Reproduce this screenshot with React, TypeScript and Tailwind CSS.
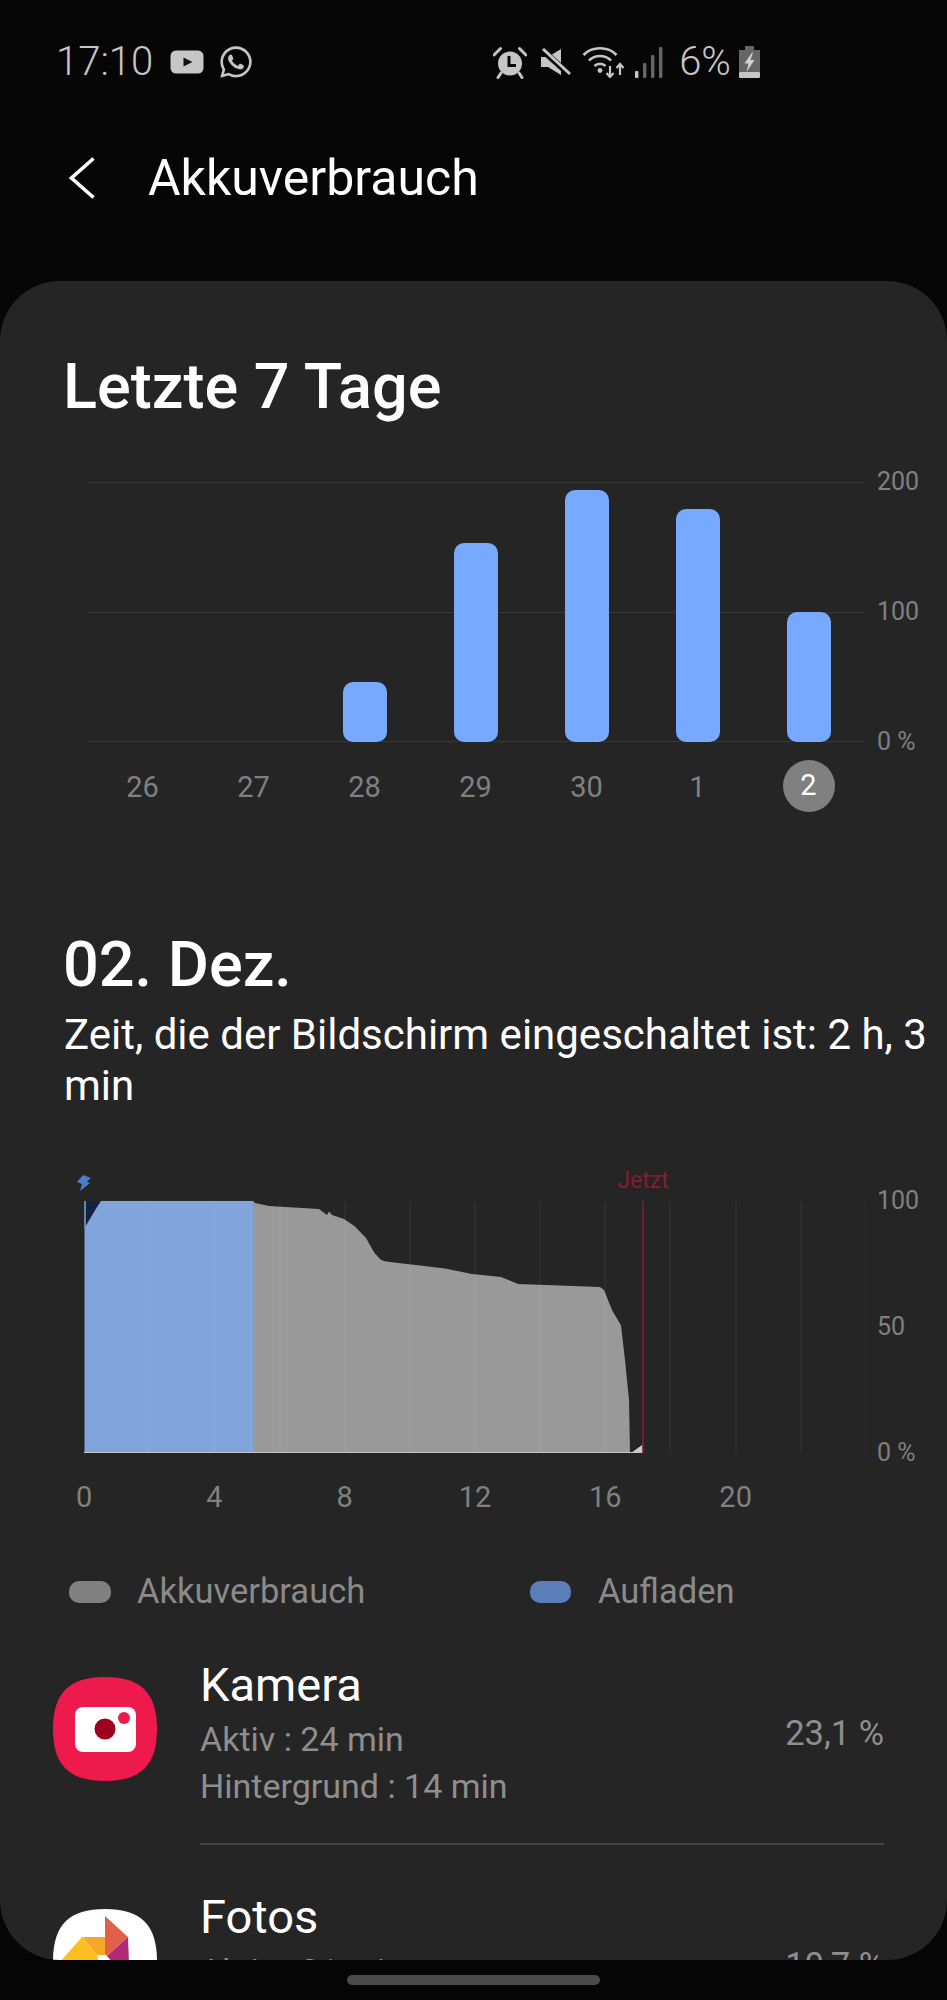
import React from 'react';
import { FaWhatsapp } from 'react-icons/fa';

const days = [
  { label: '26', height: 0 },
  { label: '27', height: 0 },
  { label: '28', height: 60 },
  { label: '29', height: 199 },
  { label: '30', height: 252 },
  { label: '1', height: 233 },
  { label: '2', height: 130 }
];

const hours = ['0', '4', '8', '12', '16', '20'];

// battery curve, coordinates are local to the 782x252 plot
const chargePath = 'M0.5 27 L13 6 L17 0 L169 0 L169 252 L0.5 252 Z';
const usagePath =
  'M169 0 L171 2 L185 5 L235 8 L243 14 L245 10.5 L248 14 L260 18 L271 25.5 L282 37 L290.5 52 L297 59 L302 60.5 L361 67.5 L388 73 L417 76 L424.5 79 L434 83 L516 86 L520 89 L528 109 L537 124.5 L541 159 L545 199 L546 252 L169 252 Z';
const endPath = 'M547 252 L558 244 L558 239.5 L559 252 Z';
const gridX = [65, 130, 196, 261, 326, 391, 456, 521, 586, 652, 717, 782];

function YouTubeIcon() {
  return (
    <svg width="34" height="24" viewBox="0 0 34 24" className="ml-[17px]">
      <rect x="0.5" y="0.5" width="33" height="23" rx="5.5" fill="#c6c6c6" />
      <path d="M13.5 7.5 L22.5 12 L13.5 16.5 Z" fill="#111111" />
    </svg>
  );
}

function AlarmIcon() {
  return (
    <svg width="34" height="33" viewBox="0 0 34 33">
      <circle cx="17" cy="17.5" r="12" fill="#c6c6c6" />
      <path d="M1 9 L7.5 2.5 M33 9 L26.5 2.5" stroke="#c6c6c6" strokeWidth="3" strokeLinecap="round" />
      <path d="M8 27 L5 31.5 M26 27 L29 31.5" stroke="#c6c6c6" strokeWidth="3" strokeLinecap="round" />
      <path d="M16 10 L16 19.5 L23 19.5" stroke="#0a0a0a" strokeWidth="3" fill="none" />
    </svg>
  );
}

function MuteIcon() {
  return (
    <svg width="30" height="28" viewBox="0 0 30 28">
      <path d="M0 9 L7 9 L20 1 L20 27 L7 19 L0 19 Z" fill="#c6c6c6" />
      <path d="M0.5 1.5 L29 27" stroke="#060606" strokeWidth="6" />
      <path d="M2 1 L29 26" stroke="#c6c6c6" strokeWidth="3" />
    </svg>
  );
}

function WifiIcon() {
  return (
    <svg width="43" height="32" viewBox="0 0 43 32" fill="none">
      <path d="M1.5 9 C 10 0, 26 0, 34.5 9" stroke="#c6c6c6" strokeWidth="2.6" />
      <path d="M7 14.5 C 13 8.5, 23 8.5, 29 14.5" stroke="#c6c6c6" strokeWidth="2.6" />
      <path d="M12.5 20 C 15.5 17, 20.5 17, 23.5 20" stroke="#c6c6c6" strokeWidth="2.6" />
      <circle cx="18" cy="24.5" r="2.4" fill="#c6c6c6" />
      <path d="M28 20 L28 31 M24.5 27 L28 31 L31.5 27" stroke="#c6c6c6" strokeWidth="2.2" />
      <path d="M38 29 L38 18 M34.5 22 L38 18 L41.5 22" stroke="#c6c6c6" strokeWidth="2.2" />
    </svg>
  );
}

function SignalIcon() {
  return (
    <svg width="28" height="31" viewBox="0 0 28 31">
      <rect x="0" y="24" width="3.4" height="7" rx="1" fill="#c6c6c6" />
      <rect x="8" y="16" width="3.4" height="15" rx="1" fill="#666666" />
      <rect x="16" y="8" width="3.4" height="23" rx="1" fill="#666666" />
      <rect x="24" y="0" width="3.4" height="31" rx="1" fill="#666666" />
    </svg>
  );
}

function BatteryIcon() {
  return (
    <svg width="21" height="32" viewBox="0 0 21 32">
      <rect x="6" y="0" width="9" height="4" fill="#666666" />
      <rect x="0" y="4" width="21" height="22" fill="#666666" />
      <rect x="0" y="26" width="21" height="6" rx="1" fill="#c6c6c6" />
      <path d="M13 6.5 L5.5 17.5 L9.5 17.5 L7.5 26 L15.5 14 L11.5 14 L14 6.5 Z" fill="#d0d0d0" />
    </svg>
  );
}

function CameraIcon() {
  return (
    <svg width="104" height="104" viewBox="0 0 104 104" className="shrink-0">
      <path d="M52 0 C 88 0, 104 16, 104 52 C 104 88, 88 104, 52 104 C 16 104, 0 88, 0 52 C 0 16, 16 0, 52 0 Z" fill="#ee1a4c" />
      <rect x="22" y="30" width="61" height="45" rx="8" fill="#ffffff" />
      <circle cx="52" cy="52" r="10.5" fill="#a00020" />
      <circle cx="71" cy="41" r="6" fill="#ee1a4c" />
    </svg>
  );
}

function PhotosIcon() {
  return (
    <svg width="104" height="104" viewBox="0 0 104 104" className="shrink-0">
      <path d="M52 0 C 88 0, 104 16, 104 52 C 104 88, 88 104, 52 104 C 16 104, 0 88, 0 52 C 0 16, 16 0, 52 0 Z" fill="#ffffff" />
      <path d="M29 28 L52 28 L52 46 L44 46 Z" fill="#f9a825" />
      <path d="M29 28 L44 46 L46 54 L6 54 Z" fill="#fcbf22" />
      <path d="M52 7 L75 28 L54 47 L52 45 Z" fill="#e0604a" />
      <path d="M75 28 L76 54 L60 54 L54 47 Z" fill="#b02a78" />
    </svg>
  );
}

function AppRow({ name, active, background, percent, icon }: { name: string; active: string; background: string; percent: string; icon: React.ReactNode }) {
  return (
    <div className="flex items-center pl-[53px] pr-[63px]">
      <div className="self-start mt-[19px]">{icon}</div>
      <div className="ml-[43px] flex-1">
        <p className="text-[47px] leading-[54px] text-white">{name}</p>
        <p className="mt-[4px] text-[34px] leading-[47px] text-[#8e8e8e]">{active}</p>
        <p className="text-[34px] leading-[47px] text-[#8e8e8e]">{background}</p>
      </div>
      <span className="text-[34.5px] text-[#8e8e8e]">{percent}</span>
    </div>
  );
}

export default function App() {
  return (
    <div className="w-[947px] h-[2000px] bg-[#060606] overflow-hidden font-['Roboto',sans-serif]">
      {/* status bar */}
      <div className="flex items-center h-[124px] pl-[56px] text-[#c6c6c6]">
        <span className="text-[40px] leading-none font-light">17:10</span>
        <YouTubeIcon />
        <FaWhatsapp className="ml-[14px] text-[36px] text-[#c6c6c6]" />
        <div className="ml-[239px] flex items-center">
          <AlarmIcon />
          <div className="ml-[14px]"><MuteIcon /></div>
          <div className="ml-[11px]"><WifiIcon /></div>
          <div className="ml-[10px]"><SignalIcon /></div>
          <span className="ml-[16px] text-[40px] leading-none font-light">6%</span>
          <div className="ml-[8px]"><BatteryIcon /></div>
        </div>
      </div>

      {/* title bar */}
      <div className="flex items-center h-[108px] pl-[69px]">
        <svg width="26" height="42" viewBox="0 0 26 42" fill="none">
          <path d="M24.5 1.5 L2.5 21 L24.5 40.5" stroke="#ffffff" strokeWidth="3.6" />
        </svg>
        <h1 className="ml-[53px] text-[50px] leading-none text-white">Akkuverbrauch</h1>
      </div>

      {/* card */}
      <div className="mt-[49px] h-[1679px] rounded-[60px] bg-[#252525] overflow-hidden pt-[70px]">
        <h2 className="pl-[63px] text-[63px] leading-[72px] font-medium text-white">Letzte 7 Tage</h2>

        <div className="mt-[59px] ml-[87px] flex">
          <div className="relative w-[777px] h-[260px]">
            <div className="absolute inset-x-0 top-0 h-px bg-[#383838]" />
            <div className="absolute inset-x-0 top-[130px] h-px bg-[#383838]" />
            <div className="absolute inset-x-0 bottom-0 h-px bg-[#383838]" />
            <div className="relative grid grid-cols-7 h-full items-end">
              {days.map(day => (
                <div key={day.label} className="flex justify-center">
                  {day.height > 0 && (
                    <div className="w-[44px] rounded-[10px] bg-[#76a9ff]" style={{ height: day.height }} />
                  )}
                </div>
              ))}
            </div>
          </div>
          <div className="ml-[13px] -my-[16px] flex flex-col justify-between text-[25px] leading-[32px] text-[#808080]">
            <span>200</span>
            <span>100</span>
            <span>0 %</span>
          </div>
        </div>

        <div className="mt-[18px] ml-[87px] w-[777px] grid grid-cols-7">
          {days.map((day, i) => (
            <div key={day.label} className="flex justify-center">
              <span
                className={
                  i === days.length - 1
                    ? 'flex items-center justify-center w-[52px] h-[52px] rounded-full bg-[#808080] text-[29px] text-white'
                    : 'flex items-center justify-center h-[52px] pt-[3px] text-[29px] text-[#808080]'
                }
              >
                {day.label}
              </span>
            </div>
          ))}
        </div>

        <h2 className="mt-[117px] pl-[63px] text-[63px] leading-[72px] font-medium text-white">02. Dez.</h2>
        <p className="mt-[8px] pl-[64px] pr-[16px] text-[42px] leading-[51px] text-white">
          Zeit, die der Bildschirm eingeschaltet ist: 2 h, 3 min
        </p>

        <div className="mt-[90px] ml-[84px] flex">
          <div className="relative w-[782px] h-[252px]">
            <svg width="782" height="252" viewBox="0 0 782 252" className="block">
              <path d="M1 27 L17 0 L1 0 Z" fill="#14233f" />
              <path d={chargePath} fill="#81a4da" />
              <path d={usagePath} fill="#999999" />
              <path d={endPath} fill="#c9c9c9" />
              {gridX.map(x => (
                <line key={x} x1={x} x2={x} y1="0" y2="252" stroke="#ffffff" strokeOpacity="0.08" />
              ))}
              <line x1="0" x2="559" y1="251.5" y2="251.5" stroke="#c4c4c4" />
              <line x1="1" x2="1" y1="0" y2="27" stroke="#81a4da" strokeWidth="1.5" />
              <line x1="559" x2="559" y1="0" y2="252" stroke="#8a1a30" strokeWidth="1.5" />
            </svg>
            <svg width="14" height="16" viewBox="0 0 14 16" className="absolute left-[-7px] top-[-26px]">
              <path d="M6 0 L14 3 L10 6.5 L13 8 L3 16 L5 9 L0 7 Z" fill="#4a7cc7" />
            </svg>
            <span className="absolute left-[559px] top-[-35px] -translate-x-1/2 text-[23px] leading-[30px] text-[#8a1a30]">Jetzt</span>
          </div>
          <div className="ml-[11px] -my-[16px] flex flex-col justify-between text-[25px] leading-[32px] text-[#808080]">
            <span>100</span>
            <span>50</span>
            <span>0 %</span>
          </div>
        </div>

        <div className="mt-[26px] ml-[19px] flex">
          {hours.map(hour => (
            <span key={hour} className="w-[130.3px] text-center text-[29px] leading-[36px] text-[#808080]">{hour}</span>
          ))}
        </div>

        <div className="mt-[61px] flex h-[32px] items-center">
          <div className="ml-[69px] w-[42px] h-[22px] rounded-[10px] bg-[#808080]" />
          <span className="ml-[26px] w-[393px] text-[34.5px] text-[#8a8a8a]">Akkuverbrauch</span>
          <div className="w-[41px] h-[22px] rounded-[10px] bg-[#5b7db8]" />
          <span className="ml-[27px] text-[34.5px] text-[#8a8a8a]">Aufladen</span>
        </div>

        <div className="mt-[50px]">
          <AppRow name="Kamera" active="Aktiv : 24 min" background="Hintergrund : 14 min" percent="23,1 %" icon={<CameraIcon />} />
          <div className="mt-[33px] mb-[45px] ml-[200px] mr-[63px] h-[2px] bg-[#444444]" />
          <AppRow name="Fotos" active="Aktiv : 21 min" background="Hintergrund : 9 min" percent="10,7 %" icon={<PhotosIcon />} />
        </div>
      </div>

      {/* home indicator */}
      <div className="mt-[15px] mx-auto w-[253px] h-[10px] rounded-full bg-[#4a4a4a]" />
    </div>
  );
}
